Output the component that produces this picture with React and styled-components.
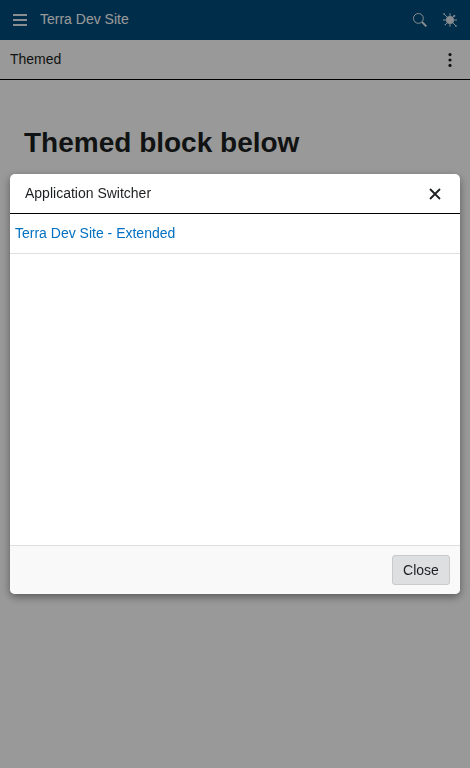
import React from "react";
import styled, { createGlobalStyle } from "styled-components";

const GlobalStyle = createGlobalStyle`
  * { box-sizing: border-box; }
  body {
    margin: 0;
    color: #1c1f21;
    background: #fff;
    font: 14px/20px "Liberation Sans", Arial, sans-serif;
  }
  h1, h2 { margin: 0; }
`;

const Page = styled.div`
  min-height: 100vh;
  background: #fff;
`;

const AppHeader = styled.header`
  display: flex;
  align-items: center;
  height: 40px;
  padding: 0 5px;
  background: #004c7c;
  color: #fff;
`;

const IconButton = styled.button`
  display: flex;
  align-items: center;
  justify-content: center;
  width: 30px;
  height: 30px;
  padding: 0;
  border: 0;
  background: none;
  color: inherit;
`;

const AppTitle = styled.div`
  flex: 1;
  margin-left: 5px;
  padding-bottom: 2px;
`;

const PageHeader = styled.div`
  display: flex;
  align-items: center;
  justify-content: space-between;
  height: 40px;
  padding: 0 5px 0 10px;
  border-bottom: 1px solid #000;
`;

const PageTitle = styled.div`
  font-size: 14px;
  padding-bottom: 1px;
`;

const Content = styled.main`
  padding: 46px 24px;
`;

const Heading = styled.h1`
  font-size: 28px;
  line-height: 34px;
  font-weight: 700;
`;

const Overlay = styled.div`
  position: fixed;
  inset: 0;
  display: flex;
  align-items: center;
  padding: 0 10px;
  background: rgba(0, 0, 0, 0.4);
`;

const Dialog = styled.section`
  display: flex;
  flex-direction: column;
  width: 100%;
  height: 420px;
  overflow: hidden;
  border-radius: 5px;
  background: #fff;
  box-shadow: 0 3px 8px rgba(0, 0, 0, 0.42);
`;

const DialogHeader = styled.header`
  display: flex;
  align-items: center;
  justify-content: space-between;
  height: 40px;
  padding: 0 10px 0 15px;
  border-bottom: 1px solid #000;
`;

const DialogTitle = styled.h2`
  padding-bottom: 1px;
  font-size: 14px;
  font-weight: 400;
`;

const AppList = styled.div`
  flex: 1;
`;

const AppLink = styled.a`
  display: flex;
  align-items: center;
  height: 40px;
  padding: 0 5px 1px;
  border-bottom: 1px solid #dedfe0;
  color: #0070c0;
  text-decoration: none;
`;

const DialogFooter = styled.footer`
  display: flex;
  align-items: center;
  justify-content: flex-end;
  height: 49px;
  padding: 0 10px;
  border-top: 1px solid #dedfe0;
  background: #f9f9f9;
`;

const CloseButton = styled.button`
  height: 30px;
  width: 58px;
  padding: 0;
  border: 1px solid #c8cacb;
  border-radius: 3px;
  background: #dedfe0;
  color: #1c1f21;
  font: inherit;
`;

const MenuIcon = () => (
  <svg width="14" height="14" viewBox="0 0 14 14" fill="currentColor" fillOpacity="0.9">
    <path d="M0 1.1h14v1.8H0zM0 6.1h14v1.8H0zM0 11.1h14v1.8H0z" />
  </svg>
);

const SearchIcon = () => (
  <svg width="14" height="14" viewBox="0 0 14 14" fill="none" stroke="currentColor" opacity="0.9">
    <circle cx="5.4" cy="5.4" r="4.9" />
    <path d="M9 9l4.4 4.4" strokeWidth="1.9" />
  </svg>
);

const BugIcon = () => (
  <svg width="14" height="14" viewBox="0 0 14 14" fill="none" stroke="currentColor" opacity="0.88">
    <circle cx="7" cy="7" r="4" fill="currentColor" stroke="none" />
    <path d="M7 .2v3M7 10.8v3M0 7h3M11 7h3M1 1l3.5 3.5M11.3 2.7L9.5 4.5M2 12l2.5-2.5M9.5 9.5L13 13" />
    <path d="M.3.3h1.5v1.5H.3zM10.5 2h1.7v1.7h-1.7zM12.2 12.2h1.5v1.5h-1.5zM1.7 11h1.3v1.3H1.7z" fill="currentColor" stroke="none" />
  </svg>
);

const MoreIcon = () => (
  <svg width="14" height="14" viewBox="0 0 14 14" fill="currentColor">
    <circle cx="7" cy="1.6" r="1.6" />
    <circle cx="7" cy="7" r="1.6" />
    <circle cx="7" cy="12.4" r="1.6" />
  </svg>
);

const CloseIcon = () => (
  <svg width="12" height="12" viewBox="0 0 12 12" fill="none" stroke="currentColor" strokeWidth="1.8">
    <path d="M1 1l10 10M11 1L1 11" />
  </svg>
);

export default function App() {
  return (
    <Page>
      <GlobalStyle />
      <AppHeader>
        <IconButton aria-label="Menu"><MenuIcon /></IconButton>
        <AppTitle>Terra Dev Site</AppTitle>
        <IconButton aria-label="Search"><SearchIcon /></IconButton>
        <IconButton aria-label="Developer tools"><BugIcon /></IconButton>
      </AppHeader>
      <PageHeader>
        <PageTitle>Themed</PageTitle>
        <IconButton aria-label="More"><MoreIcon /></IconButton>
      </PageHeader>
      <Content>
        <Heading>Themed block below</Heading>
      </Content>
      <Overlay>
        <Dialog role="dialog" aria-label="Application Switcher">
          <DialogHeader>
            <DialogTitle>Application Switcher</DialogTitle>
            <IconButton aria-label="Close dialog"><CloseIcon /></IconButton>
          </DialogHeader>
          <AppList>
            <AppLink href="#extended">Terra Dev Site - Extended</AppLink>
          </AppList>
          <DialogFooter>
            <CloseButton>Close</CloseButton>
          </DialogFooter>
        </Dialog>
      </Overlay>
    </Page>
  );
}
